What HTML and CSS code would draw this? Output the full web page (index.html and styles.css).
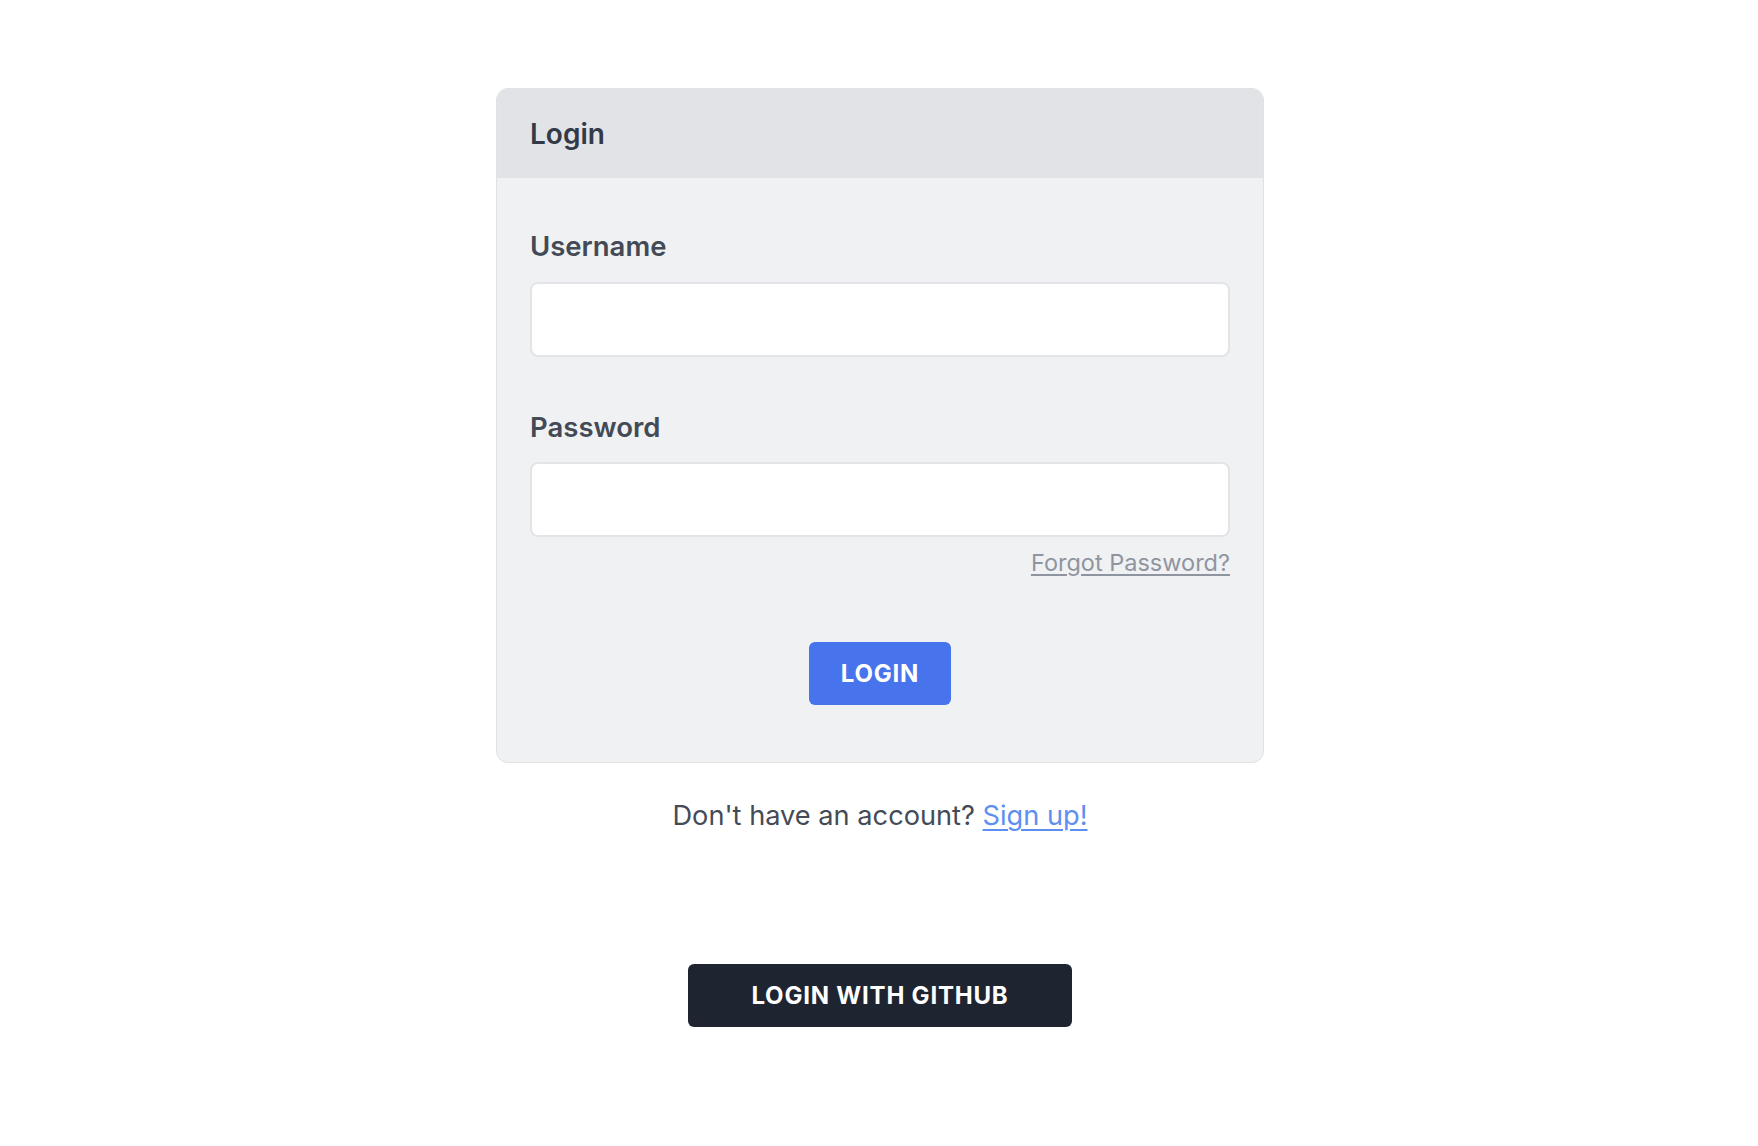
FILE: index.html
```html
<!DOCTYPE html>
<html lang="en">
<head>
<meta charset="utf-8">
<title>Login</title>
<link rel="stylesheet" href="styles.css">
</head>
<body>
<main class="page">
  <section class="card">
    <header class="card-header">
      <h1 class="card-title">Login</h1>
    </header>
    <form class="card-body">
      <label class="field-label" for="username">Username</label>
      <input class="field-input" id="username" type="text">
      <label class="field-label field-label-second" for="password">Password</label>
      <input class="field-input" id="password" type="password">
      <div class="forgot-row">
        <a class="forgot-link" href="#">Forgot Password?</a>
      </div>
      <div class="submit-row">
        <button class="btn btn-primary" type="button">LOGIN</button>
      </div>
    </form>
  </section>
  <p class="signup">Don't have an account? <a class="signup-link" href="#">Sign up!</a></p>
  <div class="github-row">
    <button class="btn btn-dark" type="button">LOGIN WITH GITHUB</button>
  </div>
</main>
</body>
</html>
```

FILE: styles.css
```css
* {
  box-sizing: border-box;
}

html, body {
  margin: 0;
  padding: 0;
  background: #ffffff;
}

body {
  font-family: Inter, "Noto Sans", "Liberation Sans", sans-serif;
  color: #444b57;
}

.page {
  padding-top: 88px;
  padding-left: 2px;
  display: flex;
  flex-direction: column;
  align-items: center;
}

.card {
  width: 768px;
  background: #f0f1f3;
  border: 1px solid #e0e1e5;
  border-radius: 12px;
  overflow: hidden;
}

.card-header {
  background: #e2e3e7;
  padding: 24px 33px 23px;
}

.card-title {
  margin: 0;
  font-size: 28px;
  line-height: 42px;
  font-weight: 600;
  color: #333a47;
}

.card-body {
  margin: 0;
  padding: 47px 33px 57px;
  display: flex;
  flex-direction: column;
}

.field-label {
  font-size: 27.5px;
  line-height: 42px;
  font-weight: 600;
  color: #434a56;
  margin-bottom: 15px;
}

.field-label-second {
  margin-top: 49px;
  margin-bottom: 14px;
}

.field-input {
  display: block;
  width: 100%;
  height: 75px;
  border: 2px solid #e3e4e8;
  border-radius: 8px;
  background: #ffffff;
  font-size: 24px;
  padding: 0 18px;
  outline: none;
}

.forgot-row {
  display: flex;
  justify-content: flex-end;
  margin-top: 11px;
}

.forgot-link {
  font-size: 23.5px;
  line-height: 30px;
  color: #8f95a0;
  text-decoration: underline;
  text-underline-offset: 3px;
  text-decoration-thickness: 2px;
}

.submit-row {
  display: flex;
  justify-content: center;
  margin-top: 64px;
}

.btn {
  height: 63px;
  border: none;
  border-radius: 6px;
  font-family: Inter, "Noto Sans", "Liberation Sans", sans-serif;
  font-size: 24px;
  font-weight: 700;
  letter-spacing: 0.8px;
  color: #ffffff;
  cursor: pointer;
}

.btn-primary {
  width: 142px;
  background: #4773ec;
}

.signup {
  margin: 32px 0 0;
  font-size: 27.2px;
  line-height: 42px;
  color: #444b57;
}

.signup-link {
  color: #5d8ff0;
  text-decoration: underline;
  text-underline-offset: 4px;
  text-decoration-thickness: 2px;
}

.github-row {
  margin-top: 127px;
  display: flex;
  justify-content: center;
}

.btn-dark {
  width: 384px;
  background: #1f2431;
}
```
